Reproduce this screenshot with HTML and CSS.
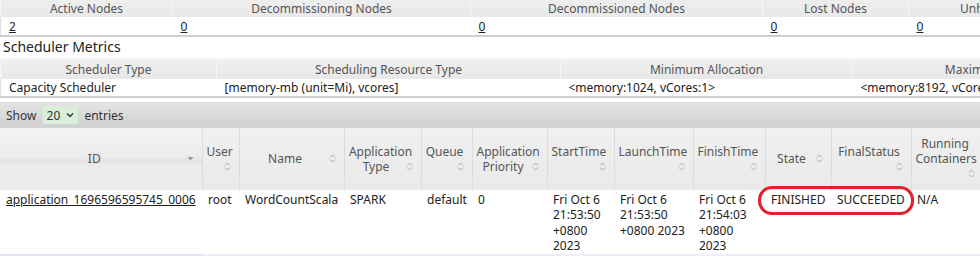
FILE: index.html
```html
<!DOCTYPE html>
<html lang="en">
<head>
  <meta charset="UTF-8" />
  <title>YARN Applications</title>
  <link rel="stylesheet" href="styles.css">
</head>
<body>

  <div class="page">

    <!-- Cluster nodes metrics -->
    <table class="metrics nodes">
      <colgroup>
        <col style="width:172px"><col style="width:298px"><col style="width:292px"><col style="width:146px"><col style="width:200px">
      </colgroup>
      <thead>
        <tr>
          <th>Active Nodes</th>
          <th>Decommissioning Nodes</th>
          <th>Decommissioned Nodes</th>
          <th>Lost Nodes</th>
          <th>Unhealthy Nodes</th>
        </tr>
      </thead>
      <tbody>
        <tr>
          <td><a href="#">2</a></td>
          <td><a href="#">0</a></td>
          <td><a href="#">0</a></td>
          <td><a href="#">0</a></td>
          <td><a href="#">0</a></td>
        </tr>
      </tbody>
    </table>

    <div class="section-title">Scheduler Metrics</div>

    <!-- Scheduler metrics -->
    <table class="metrics scheduler">
      <colgroup>
        <col style="width:216px"><col style="width:344px"><col style="width:292px"><col style="width:300px">
      </colgroup>
      <thead>
        <tr>
          <th>Scheduler Type</th>
          <th>Scheduling Resource Type</th>
          <th>Minimum Allocation</th>
          <th>Maximum Allocation</th>
        </tr>
      </thead>
      <tbody>
        <tr>
          <td>Capacity Scheduler</td>
          <td>[memory-mb (unit=Mi), vcores]</td>
          <td>&lt;memory:1024, vCores:1&gt;</td>
          <td>&lt;memory:8192, vCores:4&gt;</td>
        </tr>
      </tbody>
    </table>

    <div class="toolbar">
      <label>Show
        <span class="select">20
          <svg width="8" height="6" viewBox="0 0 8 6"><path d="M1 1.5 L4 4.5 L7 1.5" fill="none" stroke="#333" stroke-width="1.4"/></svg>
        </span>
        entries</label>
    </div>

    <!-- Applications -->
    <div class="apps-wrap">
      <table class="apps">
        <colgroup>
          <col style="width:202px"><col style="width:37px"><col style="width:105px"><col style="width:77px">
          <col style="width:51px"><col style="width:75px"><col style="width:67px"><col style="width:79px">
          <col style="width:72px"><col style="width:66px"><col style="width:80px"><col style="width:72px">
          <col style="width:90px">
        </colgroup>
        <thead>
          <tr>
            <th class="sorted">ID<span class="sort"><svg width="7" height="9" viewBox="0 0 7 9"><path d="M0.5 3 L6.5 3 L3.5 6.5 Z" fill="#999"/></svg></span></th>
            <th>User<span class="sort"><svg width="7" height="9" viewBox="0 0 7 9"><path d="M1 3.5 L3.5 1 L6 3.5 M1 5.5 L3.5 8 L6 5.5" fill="none" stroke="#aaa" stroke-width="1"/></svg></span></th>
            <th>Name<span class="sort"><svg width="7" height="9" viewBox="0 0 7 9"><path d="M1 3.5 L3.5 1 L6 3.5 M1 5.5 L3.5 8 L6 5.5" fill="none" stroke="#aaa" stroke-width="1"/></svg></span></th>
            <th>Application Type<span class="sort"><svg width="7" height="9" viewBox="0 0 7 9"><path d="M1 3.5 L3.5 1 L6 3.5 M1 5.5 L3.5 8 L6 5.5" fill="none" stroke="#aaa" stroke-width="1"/></svg></span></th>
            <th>Queue<span class="sort"><svg width="7" height="9" viewBox="0 0 7 9"><path d="M1 3.5 L3.5 1 L6 3.5 M1 5.5 L3.5 8 L6 5.5" fill="none" stroke="#aaa" stroke-width="1"/></svg></span></th>
            <th>Application Priority<span class="sort"><svg width="7" height="9" viewBox="0 0 7 9"><path d="M1 3.5 L3.5 1 L6 3.5 M1 5.5 L3.5 8 L6 5.5" fill="none" stroke="#aaa" stroke-width="1"/></svg></span></th>
            <th>StartTime<span class="sort"><svg width="7" height="9" viewBox="0 0 7 9"><path d="M1 3.5 L3.5 1 L6 3.5 M1 5.5 L3.5 8 L6 5.5" fill="none" stroke="#aaa" stroke-width="1"/></svg></span></th>
            <th>LaunchTime<span class="sort"><svg width="7" height="9" viewBox="0 0 7 9"><path d="M1 3.5 L3.5 1 L6 3.5 M1 5.5 L3.5 8 L6 5.5" fill="none" stroke="#aaa" stroke-width="1"/></svg></span></th>
            <th>FinishTime<span class="sort"><svg width="7" height="9" viewBox="0 0 7 9"><path d="M1 3.5 L3.5 1 L6 3.5 M1 5.5 L3.5 8 L6 5.5" fill="none" stroke="#aaa" stroke-width="1"/></svg></span></th>
            <th>State<span class="sort"><svg width="7" height="9" viewBox="0 0 7 9"><path d="M1 3.5 L3.5 1 L6 3.5 M1 5.5 L3.5 8 L6 5.5" fill="none" stroke="#aaa" stroke-width="1"/></svg></span></th>
            <th>FinalStatus<span class="sort"><svg width="7" height="9" viewBox="0 0 7 9"><path d="M1 3.5 L3.5 1 L6 3.5 M1 5.5 L3.5 8 L6 5.5" fill="none" stroke="#aaa" stroke-width="1"/></svg></span></th>
            <th>Running Containers<span class="sort"><svg width="7" height="9" viewBox="0 0 7 9"><path d="M1 3.5 L3.5 1 L6 3.5 M1 5.5 L3.5 8 L6 5.5" fill="none" stroke="#aaa" stroke-width="1"/></svg></span></th>
            <th>Allocated CPU VCores</th>
          </tr>
        </thead>
        <tbody>
          <tr class="odd">
            <td class="sorted"><a href="#">application_1696596595745_0006</a></td>
            <td>root</td>
            <td>WordCountScala</td>
            <td>SPARK</td>
            <td>default</td>
            <td>0</td>
            <td>Fri Oct 6 21:53:50 +0800 2023</td>
            <td>Fri Oct 6 21:53:50 +0800 2023</td>
            <td>Fri Oct 6 21:54:03 +0800 2023</td>
            <td>FINISHED</td>
            <td>SUCCEEDED</td>
            <td>N/A</td>
            <td>N/A</td>
          </tr>
          <tr class="even">
            <td class="sorted"><a href="#">application_1696596595745_0005</a></td>
            <td>root</td>
            <td>WordCountScala</td>
            <td>SPARK</td>
            <td>default</td>
            <td>0</td>
            <td>Fri Oct 6</td>
            <td>Fri Oct 6</td>
            <td>Fri Oct 6</td>
            <td>FINISHED</td>
            <td>SUCCEEDED</td>
            <td>N/A</td>
            <td>N/A</td>
          </tr>
        </tbody>
      </table>

      <!-- red annotation mark -->
      <div class="highlight"></div>
    </div>

  </div>

</body>
</html>
```

FILE: styles.css
```css
* {
  box-sizing: border-box;
  margin: 0;
  padding: 0;
}

body {
  font-family: 'Noto Sans', 'Open Sans', sans-serif;
  font-size: 12px;
  color: #222;
  background: #fff;
  width: 980px;
  height: 256px;
  overflow: hidden;
}

.page {
  width: 1200px;
}

a {
  color: #222;
}

/* Metrics tables */
.metrics {
  border-collapse: collapse;
  table-layout: fixed;
  width: 1108px;
}

.metrics th {
  height: 17px;
  font-weight: normal;
  color: #555;
  text-align: center;
  background: linear-gradient(#eeeeee, #e8e8e8);
  border-left: 1px solid #f7f7f7;
  line-height: 15px;
  white-space: nowrap;
}

.metrics td {
  height: 19px;
  padding: 0 6px 0 8px;
  background: #fff;
  line-height: 15px;
  border-bottom: 2px solid #cfcfcf;
  white-space: nowrap;
}

.metrics td:first-child {
  border-left: 1px solid #e0e0e0;
}

.nodes th {
  height: 17px;
}

.scheduler {
  width: 1152px;
}

.scheduler th {
  height: 20px;
  border-top: 2px solid #f4f4f4;
}

.scheduler td {
  height: 18px;
}

.section-title {
  font-size: 14px;
  color: #222;
  height: 21px;
  line-height: 20px;
  padding-left: 3px;
}

/* Show entries bar */
.toolbar {
  margin-top: 4px;
  height: 25px;
  padding: 0 6px;
  display: flex;
  align-items: center;
  background: linear-gradient(#e4e4e4, #d0d0d0);
  border-top: 1px solid #d8d8d8;
  color: #333;
}

.toolbar .select {
  display: inline-flex;
  align-items: center;
  gap: 6px;
  height: 18px;
  margin: 0 3px;
  padding: 0 4px 0 4px;
  background: #d9efd9;
}

/* Applications table */
.apps-wrap {
  position: relative;
}

.apps {
  border-collapse: collapse;
  table-layout: fixed;
  width: 1073px;
}

.apps th {
  height: 62px;
  padding: 0 8px 0 4px;
  font-weight: normal;
  color: #555;
  text-align: center;
  line-height: 15px;
  background: linear-gradient(#f0f0f0, #e9e9e9);
  border-left: 1px solid #dcdcdc;
  border-top: 1px solid #d6d6d6;
}

.apps th:first-child {
  border-left: none;
}

.apps th.sorted {
  background: linear-gradient(#f3f3f3 0%, #ececec 45%, #e2e2e2 52%, #ececec 60%, #ebebeb 100%);
}

.apps .sort {
  float: right;
  width: 7px;
  height: 15px;
  display: flex;
  align-items: center;
  margin-left: 2px;
}

.apps td {
  padding: 2px 4px 0 6px;
  vertical-align: top;
  line-height: 15.5px;
  background: #fff;
  height: 64px;
}

.apps tr.even td {
  background: #eeeff8;
}

.apps tr.even td.sorted {
  background: #e2e4f0;
}

.highlight {
  position: absolute;
  left: 758px;
  top: 59px;
  width: 156px;
  height: 29px;
  border: 3px solid #e3202b;
  border-radius: 14px;
}
```
